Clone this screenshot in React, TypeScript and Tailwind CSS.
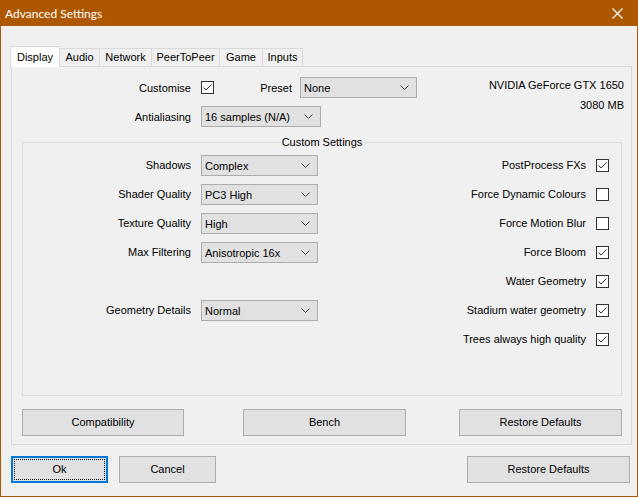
import { useState } from 'react';

const font = { fontFamily: '"Liberation Sans", Arial, sans-serif' };
const titleFont = { fontFamily: 'Lato, "Liberation Sans", sans-serif' };

function Chevron() {
  return (
    <svg width="9" height="5" viewBox="0 0 9 5" className="shrink-0">
      <path d="M0.5 0.5 L4.5 4.5 L8.5 0.5" fill="none" stroke="#444" strokeWidth="1" />
    </svg>
  );
}

function Select({ value, w }: { value: string; w: string }) {
  return (
    <div className={`${w} h-[21px] flex items-center justify-between bg-[#e1e1e1] border border-[#adadad] pl-[3px] pr-[7px] text-[11px] text-black`}>
      <span className="pt-px">{value}</span>
      <Chevron />
    </div>
  );
}

function Check({ on }: { on: boolean }) {
  return (
    <div className="w-[13px] h-[13px] border border-[#333] bg-white shrink-0 flex items-center justify-center">
      {on && (
        <svg width="11" height="11" viewBox="0 0 11 11">
          <path d="M1.5 5.5 L4 8 L9.5 2.5" fill="none" stroke="#333" strokeWidth="1" />
        </svg>
      )}
    </div>
  );
}

function Button({ label, w, focused }: { label: string; w: string; focused?: boolean }) {
  if (focused) {
    return (
      <div className={`${w} h-[27px] border-2 border-[#0078d7] bg-[#e1e1e1] p-px`}>
        <div className="w-full h-full border border-dotted border-black flex items-center justify-center text-[11px]">
          {label}
        </div>
      </div>
    );
  }
  return (
    <div className={`${w} h-[27px] border border-[#adadad] bg-[#e1e1e1] flex items-center justify-center text-[11px]`}>
      {label}
    </div>
  );
}

const tabs: [string, string][] = [
  ['Display', 'w-[50px]'],
  ['Audio', 'w-[40px]'],
  ['Network', 'w-[52px]'],
  ['PeerToPeer', 'w-[68px]'],
  ['Game', 'w-[43px]'],
  ['Inputs', 'w-[40px]'],
];

const leftRows: [string, string][] = [
  ['Shadows', 'Complex'],
  ['Shader Quality', 'PC3 High'],
  ['Texture Quality', 'High'],
  ['Max Filtering', 'Anisotropic 16x'],
  ['', ''],
  ['Geometry Details', 'Normal'],
  ['', ''],
];

const rightRows: [string, boolean][] = [
  ['PostProcess FXs', true],
  ['Force Dynamic Colours', false],
  ['Force Motion Blur', false],
  ['Force Bloom', true],
  ['Water Geometry', true],
  ['Stadium water geometry', true],
  ['Trees always high quality', true],
];

export default function App() {
  const [tab] = useState(0);
  return (
    <div className="w-[638px] h-[497px] border border-[#ad5700] bg-[#f0f0f0] flex flex-col text-black" style={font}>
      {/* title bar */}
      <div className="h-[25px] bg-[#ad5700] flex items-center justify-between pl-[4px] pr-[14px] text-white text-[12px]" style={titleFont}>
        <span>Advanced Settings</span>
        <svg width="11" height="11" viewBox="0 0 11 11">
          <path d="M0.5 0.5 L10.5 10.5 M10.5 0.5 L0.5 10.5" stroke="white" strokeWidth="1.2" />
        </svg>
      </div>

      <div className="flex flex-col pl-[10px] pr-[5px] pt-[20px]">
        {/* tabs */}
        <div className="flex items-end h-[21px] relative z-10 text-[11px]">
          {tabs.map(([t, w], i) =>
            i === tab ? (
              <div key={t} className={`${w} h-[21px] bg-white border border-b-0 border-[#d9d9d9] flex items-center justify-center -ml-px`}>
                {t}
              </div>
            ) : (
              <div key={t} className={`${w} h-[18px] mb-px border border-l-0 border-b-0 border-[#d9d9d9] flex items-center justify-center`}>
                {t}
              </div>
            )
          )}
        </div>

        {/* panel */}
        <div className="h-[379px] -mt-px border border-[#d9d9d9] flex flex-col pt-[10px] pl-[10px] pr-[9px]">
          <div className="flex">
            <div className="flex flex-col gap-[8px]">
              <div className="flex items-center h-[21px]">
                <span className="w-[169px] text-right text-[11px] pt-px">Customise</span>
                <div className="ml-[10px]"><Check on={true} /></div>
                <span className="ml-[45px] w-[33px] text-right text-[11px] pt-px">Preset</span>
                <div className="ml-[8px]"><Select value="None" w="w-[117px]" /></div>
              </div>
              <div className="flex items-center h-[21px]">
                <span className="w-[169px] text-right text-[11px] pt-px">Antialiasing</span>
                <div className="ml-[10px]"><Select value="16 samples (N/A)" w="w-[120px]" /></div>
              </div>
            </div>
            <div className="flex-1 flex flex-col items-end pt-[1px] -mr-[2px] gap-[6px] text-[11px]">
              <span className="leading-[14px]">NVIDIA GeForce GTX 1650</span>
              <span className="leading-[14px]">3080 MB</span>
            </div>
          </div>

          {/* group box */}
          <div className="relative mt-[15px] h-[254px] border border-[#dcdcdc] flex pt-[12px]">
            <span className="absolute -top-[8px] left-1/2 -translate-x-1/2 bg-[#f0f0f0] px-[1px] text-[11px] leading-[14px]">
              Custom Settings
            </span>
            <div className="flex flex-col">
              {leftRows.map(([l, v], i) => (
                <div key={i} className="h-[29px] flex items-start">
                  {l && (
                    <>
                      <span className="w-[168px] text-right text-[11px] leading-[21px]">{l}</span>
                      <div className="ml-[10px]"><Select value={v} w="w-[117px]" /></div>
                    </>
                  )}
                </div>
              ))}
            </div>
            <div className="flex-1 flex flex-col items-end pr-[12px]">
              {rightRows.map(([l, on]) => (
                <div key={l} className="h-[29px] flex items-start">
                  <div className="h-[21px] flex items-center gap-[10px]">
                    <span className="text-[11px]">{l}</span>
                    <Check on={on} />
                  </div>
                </div>
              ))}
            </div>
          </div>

          <div className="flex mt-[13px]">
            <Button label="Compatibility" w="w-[163px]" />
            <div className="ml-[59px]"><Button label="Bench" w="w-[163px]" /></div>
            <div className="ml-[53px]"><Button label="Restore Defaults" w="w-[163px]" /></div>
          </div>
        </div>

        {/* bottom buttons */}
        <div className="flex mt-[11px]">
          <Button label="Ok" w="w-[97px]" focused />
          <div className="ml-[11px]"><Button label="Cancel" w="w-[97px]" /></div>
          <div className="ml-auto mr-[2px]"><Button label="Restore Defaults" w="w-[163px]" /></div>
        </div>
      </div>
    </div>
  );
}
